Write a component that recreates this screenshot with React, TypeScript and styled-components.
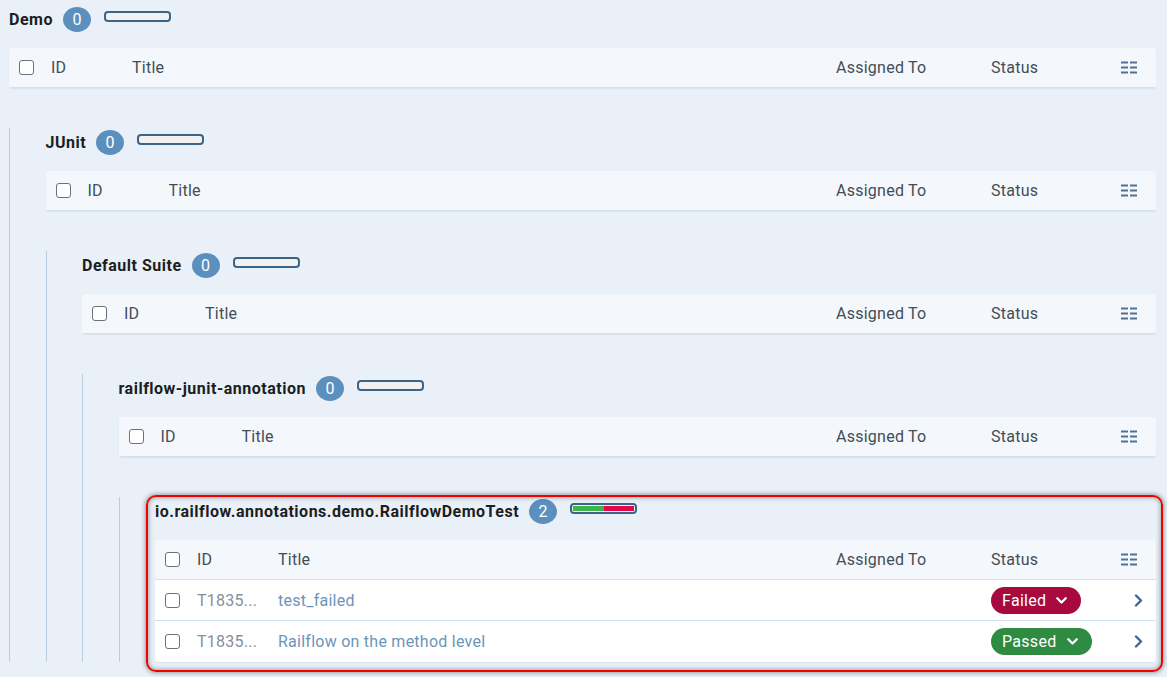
import React from "react";
import styled, { createGlobalStyle } from "styled-components";

const Global = createGlobalStyle`
  html, body { margin: 0; padding: 0; background: #e9f0f7; }
  body { font-family: Roboto, "Liberation Sans", Arial, sans-serif; }
  * { box-sizing: border-box; }
`;

type Test = { id: string; title: string; status: "Failed" | "Passed" };
type Node = {
  title: string;
  count: number;
  progress?: { passed: number; failed: number };
  tests?: Test[];
  highlight?: boolean;
  children?: Node[];
};

const tree: Node = {
  title: "Demo",
  count: 0,
  children: [
    {
      title: "JUnit",
      count: 0,
      children: [
        {
          title: "Default Suite",
          count: 0,
          children: [
            {
              title: "railflow-junit-annotation",
              count: 0,
              children: [
                {
                  title: "io.railflow.annotations.demo.RailflowDemoTest",
                  count: 2,
                  highlight: true,
                  progress: { passed: 1, failed: 1 },
                  tests: [
                    { id: "T1835...", title: "test_failed", status: "Failed" },
                    { id: "T1835...", title: "Railflow on the method level", status: "Passed" },
                  ],
                },
              ],
            },
          ],
        },
      ],
    },
  ],
};

const Page = styled.div`
  padding: 5px 11px 0 9px;
  min-height: 677px;
`;

const SectionBox = styled.section<{ $highlight?: boolean }>`
  position: relative;
  ${(p) =>
    p.$highlight &&
    `
    &::after {
      content: "";
      position: absolute;
      left: -9px;
      top: -2px;
      right: -7px;
      bottom: -10px;
      border: 2.5px solid #f40000;
      border-radius: 10px;
      box-shadow: 0 0 4px 1px rgba(0,0,0,0.35), inset 0 0 4px 1px rgba(0,0,0,0.3);
      pointer-events: none;
    }
  `}
`;

const SectionHeader = styled.div`
  display: flex;
  align-items: center;
  height: 28px;
`;

const SectionTitle = styled.span`
  font-size: 16px;
  font-weight: 700;
  letter-spacing: 0.5px;
  color: #1b1e22;
`;

const Badge = styled.span`
  display: inline-flex;
  align-items: center;
  justify-content: center;
  width: 28px;
  height: 25px;
  border-radius: 50%;
  background: #5b8fbe;
  color: #fff;
  font-size: 16px;
  margin-left: 10px;
`;

const Progress = styled.div`
  display: flex;
  width: 67px;
  height: 11px;
  margin-left: 13px;
  margin-top: -5px;
  border: 2px solid #3a6588;
  border-radius: 4px;
  background: #f1f1f1;
  padding: 1px;
  overflow: hidden;
`;

const Segment = styled.div<{ $color: string }>`
  height: 100%;
  background: ${(p) => p.$color};
`;

const Table = styled.div`
  margin-top: 15px;
  border-radius: 3px;
  overflow: hidden;
  box-shadow: 0 1px 1px rgba(120, 150, 180, 0.15);
`;

const Row = styled.div<{ $head?: boolean }>`
  display: grid;
  grid-template-columns: 42px 81px 1fr 155px 130px 35px;
  align-items: center;
  height: ${(p) => (p.$head ? 40 : 41)}px;
  background: ${(p) => (p.$head ? "#f4f8fc" : "#ffffff")};
  border-bottom: 1px solid #d3e0eb;
  font-size: 16px;
  letter-spacing: 0.25px;
  color: #434d58;
  &:last-child {
    border-bottom: ${(p) => (p.$head ? "1px solid #d3e0eb" : "none")};
  }
`;

const CheckCell = styled.div`
  padding-left: 10px;
  display: flex;
  align-items: center;
`;

const Checkbox = styled.span`
  display: inline-block;
  width: 15px;
  height: 15px;
  border: 1.5px solid #6e7277;
  border-radius: 3px;
  background: #fff;
`;

const Cell = styled.div<{ $tone?: "id" | "link" }>`
  white-space: nowrap;
  overflow: hidden;
  color: ${(p) => (p.$tone === "id" ? "#84909b" : p.$tone === "link" ? "#6c95b9" : "#434d58")};
`;

const ActionCell = styled.div<{ $pad?: number }>`
  display: flex;
  align-items: center;
  padding-left: ${(p) => p.$pad ?? 0}px;
`;

const StatusPill = styled.span<{ $status: "Failed" | "Passed" }>`
  display: inline-flex;
  align-items: center;
  gap: 10px;
  height: 27px;
  padding: 0 14px 0 11px;
  border-radius: 14px;
  color: #fff;
  font-size: 16px;
  letter-spacing: 0.3px;
  background: ${(p) => (p.$status === "Failed" ? "#a8093e" : "#2f8b42")};
`;

const Nested = styled.div`
  margin-top: 40px;
  border-left: 1px solid #b8cee0;
  padding-left: 35.5px;
`;

const ColumnsIcon = () => (
  <svg width="16" height="13" viewBox="0 0 16 13">
    {[0.5, 5.5, 10.5].map((y) => (
      <g key={y} fill="#4f7294">
        <rect x="0" y={y} width="7" height="2" />
        <rect x="9" y={y} width="7" height="2" />
      </g>
    ))}
  </svg>
);

const ChevronRight = () => (
  <svg width="9" height="13" viewBox="0 0 9 13">
    <path d="M2 1.5 L7 6.5 L2 11.5" fill="none" stroke="#3e6890" strokeWidth="2.4" strokeLinecap="round" strokeLinejoin="round" />
  </svg>
);

const ChevronDown = () => (
  <svg width="11" height="7" viewBox="0 0 11 7">
    <path d="M1.3 1.3 L5.5 5.5 L9.7 1.3" fill="none" stroke="#fff" strokeWidth="2.3" strokeLinecap="round" strokeLinejoin="round" />
  </svg>
);

const Section: React.FC<{ node: Node }> = ({ node }) => {
  const total = node.progress ? node.progress.passed + node.progress.failed : 0;
  return (
    <SectionBox $highlight={node.highlight}>
      <SectionHeader>
        <SectionTitle>{node.title}</SectionTitle>
        <Badge>{node.count}</Badge>
        <Progress>
          {node.progress && (
            <>
              <Segment $color="#3cb54b" style={{ width: `${(node.progress.passed / total) * 100}%` }} />
              <Segment $color="#e4084b" style={{ width: `${(node.progress.failed / total) * 100}%` }} />
            </>
          )}
        </Progress>
      </SectionHeader>
      <Table>
        <Row $head>
          <CheckCell>
            <Checkbox />
          </CheckCell>
          <Cell>ID</Cell>
          <Cell>Title</Cell>
          <Cell>Assigned To</Cell>
          <Cell>Status</Cell>
          <ActionCell>
            <ColumnsIcon />
          </ActionCell>
        </Row>
        {node.tests?.map((t, i) => (
          <Row key={i}>
            <CheckCell>
              <Checkbox />
            </CheckCell>
            <Cell $tone="id">{t.id}</Cell>
            <Cell $tone="link">{t.title}</Cell>
            <Cell />
            <Cell>
              <StatusPill $status={t.status}>
                {t.status}
                <ChevronDown />
              </StatusPill>
            </Cell>
            <ActionCell $pad={13}>
              <ChevronRight />
            </ActionCell>
          </Row>
        ))}
      </Table>
      {node.children && (
        <Nested>
          {node.children.map((c, i) => (
            <Section key={i} node={c} />
          ))}
        </Nested>
      )}
    </SectionBox>
  );
};

export default function App() {
  return (
    <>
      <Global />
      <Page>
        <Section node={tree} />
      </Page>
    </>
  );
}
